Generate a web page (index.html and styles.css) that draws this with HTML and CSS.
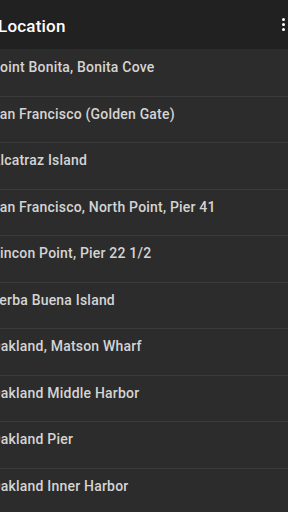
FILE: index.html
```html
<!DOCTYPE html>
<html>
<head>
<meta charset="utf-8">
<link rel="stylesheet" href="styles.css">
</head>
<body>
<div class="app">
  <header class="toolbar">
    <span class="title">Location</span>
    <span class="menu"><i></i><i></i><i></i></span>
  </header>
  <ul class="list">
    <li>Point Bonita, Bonita Cove</li>
    <li>San Francisco (Golden Gate)</li>
    <li>Alcatraz Island</li>
    <li>San Francisco, North Point, Pier 41</li>
    <li>Rincon Point, Pier 22 1/2</li>
    <li>Yerba Buena Island</li>
    <li>Oakland, Matson Wharf</li>
    <li>Oakland Middle Harbor</li>
    <li>Oakland Pier</li>
    <li>Oakland Inner Harbor</li>
  </ul>
</div>
</body>
</html>
```

FILE: styles.css
```css
html, body {
  margin: 0;
  padding: 0;
  background: #2c2c2c;
  overflow: hidden;
}
.app {
  width: 288px;
  height: 512px;
  overflow: hidden;
  font-family: Roboto, "Liberation Sans", sans-serif;
  background: #2c2c2c;
}
.toolbar {
  box-sizing: border-box;
  height: 49px;
  background: #212121;
  display: flex;
  align-items: flex-start;
  justify-content: space-between;
  padding-top: 16px;
}
.title {
  color: #ffffff;
  font-size: 17px;
  line-height: 20px;
  font-weight: 500;
  margin-left: -2px;
  letter-spacing: 0.2px;
}
.menu {
  display: flex;
  flex-direction: column;
  gap: 2px;
  margin-right: 3px;
  margin-top: 2px;
}
.menu i {
  display: block;
  width: 3px;
  height: 3px;
  border-radius: 50%;
  background: #ffffff;
}
.list {
  list-style: none;
  margin: 0;
  padding: 0;
}
.list li {
  box-sizing: border-box;
  height: 46.5px;
  padding-top: 7px;
  padding-left: 0;
  text-indent: -9px;
  font-size: 14px;
  line-height: 20px;
  font-weight: 500;
  letter-spacing: 0.2px;
  color: #d4d4d4;
  border-bottom: 1px solid #3b3b3b;
  white-space: nowrap;
}
.list li:first-child {
  height: 47.5px;
  padding-top: 8px;
}
```
